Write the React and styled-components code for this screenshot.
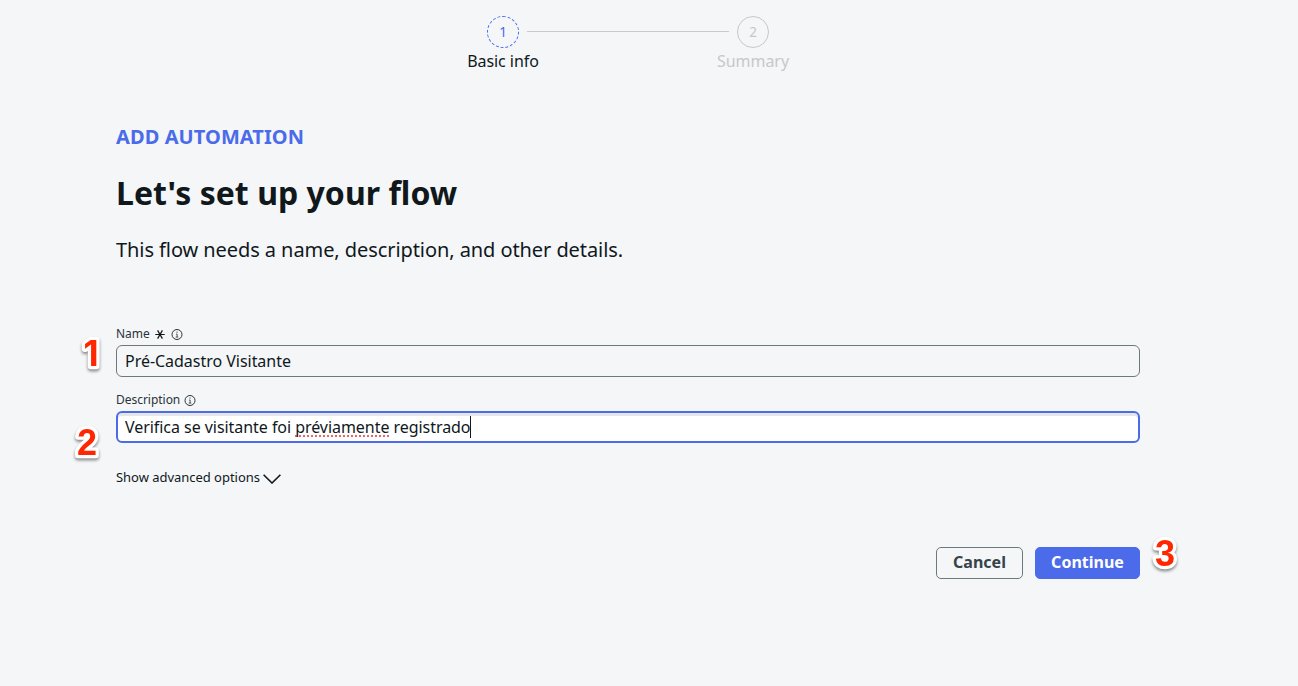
import React from "react";
import styled, { createGlobalStyle } from "styled-components";

const GlobalStyle = createGlobalStyle`
  * { box-sizing: border-box; }
  body {
    margin: 0;
    background: #f4f6f8;
    color: #10181c;
    font-family: "Noto Sans", "Open Sans", sans-serif;
  }
  h1, h2, p { margin: 0; }
`;

const Page = styled.main`
  width: 1024px;
  min-height: 686px;
  margin-left: 116px;
  padding-top: 16px;
  display: flex;
  flex-direction: column;
`;

const Stepper = styled.nav`
  display: flex;
  justify-content: center;
  height: 58px;
`;

const Step = styled.div`
  width: 48px;
  display: flex;
  flex-direction: column;
  align-items: center;
  color: ${(p) => (p.$active ? "#10181c" : "#c6c8ca")};
`;

const StepCircle = styled.span`
  width: 32px;
  height: 32px;
  border-radius: 50%;
  border: 1px ${(p) => (p.$active ? "dashed #4b6bea" : "solid #c6c8ca")};
  color: ${(p) => (p.$active ? "#4b6bea" : "#c6c8ca")};
  font-size: 13.5px;
  line-height: 30px;
  text-align: center;
`;

const StepLabel = styled.span`
  font-size: 16px;
  line-height: 26px;
  letter-spacing: -0.05px;
  white-space: nowrap;
`;

const StepLine = styled.span`
  width: 202px;
  height: 1px;
  margin-top: 15px;
  background: #c9ccce;
`;

const Eyebrow = styled.h2`
  margin-top: 49px;
  height: 28px;
  font-size: 20px;
  line-height: 28px;
  font-weight: 700;
  letter-spacing: 0.08px;
  color: #4b6bea;
`;

const Title = styled.h1`
  margin-top: 20px;
  height: 44px;
  font-size: 32px;
  line-height: 44px;
  font-weight: 700;
  letter-spacing: 0.03px;
`;

const Intro = styled.p`
  margin-top: 21px;
  height: 28px;
  font-size: 20px;
  line-height: 28px;
  letter-spacing: -0.077px;
`;

const Form = styled.form`
  margin-top: 61px;
  display: flex;
  flex-direction: column;
`;

const Field = styled.div`
  position: relative;
  height: 66px;
`;

const Label = styled.label`
  height: 20px;
  padding-bottom: 2px;
  display: flex;
  align-items: center;
  font-size: 12px;
  line-height: 18px;
  letter-spacing: -0.03px;
  color: #2b3338;
  svg { flex: none; margin-top: 2px; }
`;

const InputBox = styled.div`
  height: 32px;
  padding: 0 ${(p) => (p.$focused ? 7 : 8)}px;
  display: flex;
  align-items: center;
  border: ${(p) => (p.$focused ? "2px solid #4b6bea" : "1px solid #6c7a80")};
  border-radius: 6px;
  background: ${(p) => (p.$focused ? "#fff" : "transparent")};
  box-shadow: ${(p) => (p.$focused ? "inset 0 3px 0 #e6e6e6" : "none")};
  font-size: 16px;
  line-height: 28px;
  letter-spacing: ${(p) => (p.$focused ? -0.05 : -0.03)}px;
  white-space: pre;
`;

const Misspelled = styled.span`
  text-decoration: underline dotted #f4635d 2px;
  text-underline-offset: 2px;
  text-decoration-skip-ink: none;
`;

const Caret = styled.i`
  width: 1px;
  height: 22px;
  background: #10181c;
`;

const AdvancedToggle = styled.div`
  margin-top: 10px;
  height: 20px;
  display: flex;
  align-items: center;
  gap: 3px;
  font-size: 13px;
  line-height: 20px;
  letter-spacing: -0.03px;
  svg { margin-top: 3px; }
`;

const Actions = styled.div`
  position: relative;
  margin-top: 60px;
  display: flex;
  justify-content: flex-end;
  gap: 12px;
`;

const Button = styled.button`
  width: ${(p) => (p.$primary ? 105 : 87)}px;
  height: 32px;
  padding: 0 0 2px;
  border-radius: 5px;
  border: 1px solid ${(p) => (p.$primary ? "#4b6bea" : "#6c7a80")};
  background: ${(p) => (p.$primary ? "#4b6bea" : "transparent")};
  color: ${(p) => (p.$primary ? "#fff" : "#36434a")};
  font: 700 16px/28px "Noto Sans", "Open Sans", sans-serif;
`;

const Callout = styled.svg`
  position: absolute;
  left: ${(p) => p.$left}px;
  top: ${(p) => p.$top}px;
  width: 40px;
  height: 44px;
  overflow: visible;
  filter: drop-shadow(0 2px 1.5px rgba(0, 0, 0, 0.45));
  text {
    font: ${(p) => (p.$grotesk ? '700 35px Inter' : '700 36px "Liberation Sans"')}, Arial, sans-serif;
    fill: #ff2600;
    stroke: #fff;
    stroke-width: 6.5px;
    stroke-linejoin: round;
    paint-order: stroke;
    text-anchor: middle;
  }
`;

function Marker({ children, left, top, grotesk }) {
  return (
    <Callout $left={left} $top={top} $grotesk={grotesk}>
      <text x="20" y="34">{children}</text>
    </Callout>
  );
}

const InfoIcon = () => (
  <svg width="12" height="12" viewBox="0 0 12 12" fill="none" stroke="#2b3338">
    <circle cx="6" cy="5.5" r="5" strokeWidth="1" />
    <path d="M5.1 5h1v3M4.7 8.1h2.6" strokeWidth="0.8" />
    <circle cx="6" cy="3.1" r="0.6" fill="#2b3338" stroke="none" />
  </svg>
);

const RequiredIcon = () => (
  <svg width="10" height="10" viewBox="0 0 10 10" fill="none" stroke="#10181c" strokeWidth="1.2">
    <path d="M0.3 4.5h9.4M2.6 0.4l4.8 8.2M7.4 0.4L2.6 8.6" />
  </svg>
);

const ChevronIcon = () => (
  <svg width="18" height="10" viewBox="0 0 18 10" fill="none" stroke="#10181c" strokeWidth="1.6">
    <path d="M0.6 0.7L9 9l8.4-8.3" />
  </svg>
);

const IconGap = styled.span`
  width: ${(p) => p.$w}px;
`;

export default function App() {
  return (
    <>
      <GlobalStyle />
      <Page>
        <Stepper>
          <Step $active>
            <StepCircle $active>1</StepCircle>
            <StepLabel>Basic info</StepLabel>
          </Step>
          <StepLine />
          <Step>
            <StepCircle>2</StepCircle>
            <StepLabel>Summary</StepLabel>
          </Step>
        </Stepper>
        <Eyebrow>ADD AUTOMATION</Eyebrow>
        <Title>Let's set up your flow</Title>
        <Intro>This flow needs a name, description, and other details.</Intro>
        <Form>
          <Field>
            <Label>
              Name<IconGap $w={5} /><RequiredIcon /><IconGap $w={6} /><InfoIcon />
            </Label>
            <InputBox>Pré-Cadastro Visitante</InputBox>
            <Marker left={-45} top={7} grotesk>1</Marker>
          </Field>
          <Field>
            <Label>
              Description<IconGap $w={4} /><InfoIcon />
            </Label>
            <InputBox $focused>
              Verifica se visitante foi <Misspelled>préviamente</Misspelled> registrado<Caret />
            </InputBox>
            <Marker left={-49} top={30}>2</Marker>
          </Field>
          <AdvancedToggle>
            Show advanced options <ChevronIcon />
          </AdvancedToggle>
          <Actions>
            <Button type="button">Cancel</Button>
            <Button type="button" $primary>Continue</Button>
            <Marker left={1029} top={-15}>3</Marker>
          </Actions>
        </Form>
      </Page>
    </>
  );
}
